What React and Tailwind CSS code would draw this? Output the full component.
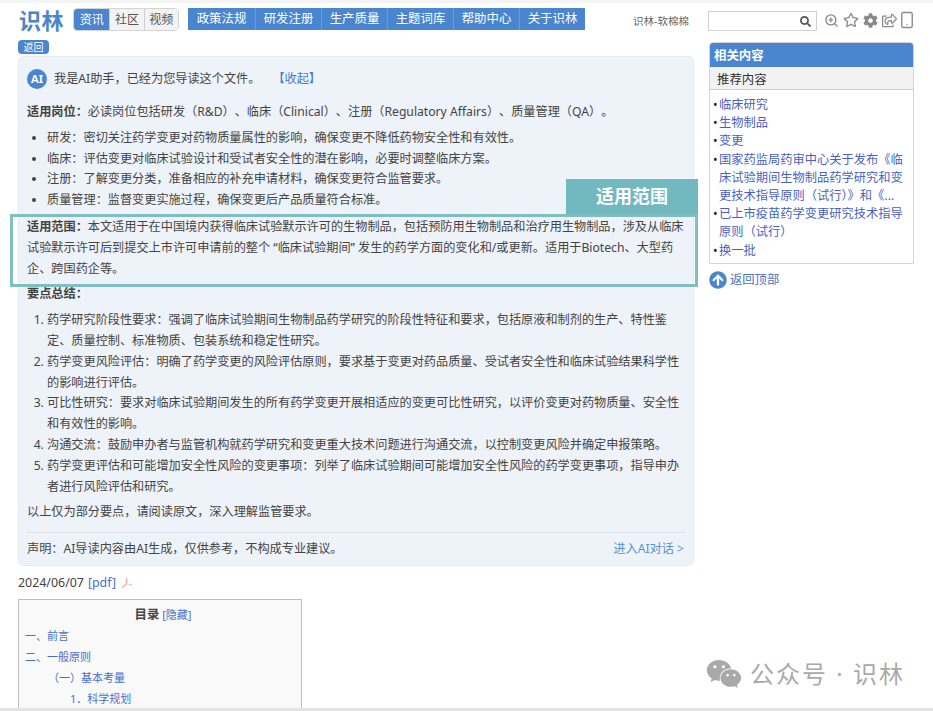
import { FaSearch, FaRegStar, FaCog, FaRegShareSquare, FaArrowCircleUp, FaWeixin } from "react-icons/fa";
import { SiAdobeacrobatreader } from "react-icons/si";
import { ZoomIn, Smartphone } from "lucide-react";

const tabs = ["资讯", "社区", "视频"];
const navItems = ["政策法规", "研发注册", "生产质量", "主题词库", "帮助中心", "关于识林"];

const roles = [
  "研发\uFF1A密切关注药学变更对药物质量属性的影响\uFF0C确保变更不降低药物安全性和有效性。",
  "临床\uFF1A评估变更对临床试验设计和受试者安全性的潜在影响\uFF0C必要时调整临床方案。",
  "注册\uFF1A了解变更分类\uFF0C准备相应的补充申请材料\uFF0C确保变更符合监管要求。",
  "质量管理\uFF1A监督变更实施过程\uFF0C确保变更后产品质量符合标准。",
];

const points = [
  "药学研究阶段性要求\uFF1A强调了临床试验期间生物制品药学研究的阶段性特征和要求\uFF0C包括原液和制剂的生产、特性鉴\n定、质量控制、标准物质、包装系统和稳定性研究。",
  "药学变更风险评估\uFF1A明确了药学变更的风险评估原则\uFF0C要求基于变更对药品质量、受试者安全性和临床试验结果科学性\n的影响进行评估。",
  "可比性研究\uFF1A要求对临床试验期间发生的所有药学变更开展相适应的变更可比性研究\uFF0C以评价变更对药物质量、安全性\n和有效性的影响。",
  "沟通交流\uFF1A鼓励申办者与监管机构就药学研究和变更重大技术问题进行沟通交流\uFF0C以控制变更风险并确定申报策略。",
  "药学变更评估和可能增加安全性风险的变更事项\uFF1A列举了临床试验期间可能增加安全性风险的药学变更事项\uFF0C指导申办\n者进行风险评估和研究。",
];

const related = [
  "临床研究",
  "生物制品",
  "变更",
  "国家药监局药审中心关于发布《临床试验期间生物制品药学研究和变更技术指导原则\uFF08试行\uFF09》和《...",
  "已上市疫苗药学变更研究技术指导原则\uFF08试行\uFF09",
  "换一批",
];

const rolesLine = "必读岗位包括研发\uFF08R&D\uFF09、临床\uFF08Clinical\uFF09、注册\uFF08Regulatory Affairs\uFF09、质量管理\uFF08QA\uFF09。";
const scopeLine = "本文适用于在中国境内获得临床试验默示许可的生物制品\uFF0C包括预防用生物制品和治疗用生物制品\uFF0C涉及从临床试验默示许可后到提交上市许可申请前的整个 “临床试验期间” 发生的药学方面的变化和/或更新。适用于Biotech、大型药企、跨国药企等。";

function Header() {
  return (
    <div className="flex items-start pl-[19px] pt-[5px]">
      <div className="w-[54px] text-[22px] leading-[24px] font-bold tracking-[0.5px] text-[#4a86cb]">识林</div>
      <div className="flex h-[23px] w-[106px] overflow-hidden rounded border border-[#d5d5d5] text-[12px] leading-[22px]">
        {tabs.map((t, i) => (
          <div
            key={t}
            className={i === 0 ? "w-[36px] bg-[#4a86cf] text-center text-white" : "w-[35px] border-l border-[#cfcfcf] bg-[#f3f3f3] text-center text-[#555]"}
          >
            {t}
          </div>
        ))}
      </div>
      <div className="ml-[9px] flex h-[22px] bg-[#4a86cf] text-[12.4px] leading-[22px] text-white">
        {navItems.map((n, i) => (
          <div key={n} className={i === 0 ? "w-[67px] text-center" : "w-[66px] border-l border-[#6a9bd8] text-center"}>
            {n}
          </div>
        ))}
      </div>
      <div className="ml-[48px] mt-[6px] w-[75px] text-[10.5px] leading-[14px] text-[#666]">识林-软棉棉</div>
      <div className="flex h-[20px] w-[109px] mt-[3px] items-center justify-end border border-[#d0d0d0] pr-[5px]">
        <FaSearch className="text-[11px] text-[#555]" />
      </div>
      <div className="ml-[7px] mt-[3px] flex items-center gap-[4px] text-[#8a8a8a]">
        <ZoomIn size={15} strokeWidth={2.2} />
        <FaRegStar className="text-[16px]" />
        <FaCog className="text-[15px]" />
        <FaRegShareSquare className="text-[15px]" />
        <Smartphone size={18} strokeWidth={1.8} className="-ml-[3px]" />
      </div>
    </div>
  );
}

function AiPanel() {
  return (
    <div className="rounded-md border border-[#e6e9f0] bg-[#eef2f9] text-[12.17px] leading-[20.8px] text-[#444] [text-spacing-trim:space-all]">
      <div className="px-[8px] pt-[11px]">
        <div className="flex h-[22px] items-center">
          <div className="flex h-[20px] w-[20px] items-center justify-center rounded-full bg-[#4a86cf] text-[11px] font-bold text-white">AI</div>
          <span className="ml-[7px]">{"我是AI助手\uFF0C已经为您导读这个文件。"}</span>
          <span className="ml-[12px] text-[#3b7fc9]">【收起】</span>
        </div>
        <p className="mt-[12px]">
          <b className="font-bold">{"适用岗位\uFF1A"}</b>{rolesLine}
        </p>
        <ul className="mt-[5px] list-disc pl-[20px]">
          {roles.map((r) => (
            <li key={r}>{r}</li>
          ))}
        </ul>
        <div className="relative mt-[6px]">
          <p>
            <b className="font-bold">{"适用范围\uFF1A"}</b>{scopeLine}
          </p>
          <div className="absolute -left-[17px] -right-[13px] -top-[3px] -bottom-[8px] border-[3px] border-[#7fbfc4]" />
          <div className="absolute -right-[13px] -top-[38px] flex h-[35px] w-[132px] items-center justify-center bg-[#72b9bf] text-[18px] font-bold text-white">适用范围</div>
        </div>
        <p className="mt-[5px] font-bold">{"要点总结\uFF1A"}</p>
        <ol className="mt-[5px] list-decimal whitespace-pre-line pl-[20px]">
          {points.map((p) => (
            <li key={p}>{p}</li>
          ))}
        </ol>
        <p className="mt-[5px]">{"以上仅为部分要点\uFF0C请阅读原文\uFF0C深入理解监管要求。"}</p>
      </div>
      <div className="mx-[8px] mt-[9px] flex h-[33px] items-center justify-between border-t border-[#dfe3ea] pr-[1px]">
        <span>{"声明\uFF1AAI导读内容由AI生成\uFF0C仅供参考\uFF0C不构成专业建议。"}</span>
        <span className="text-[#5b92d2]">进入AI对话 &gt;</span>
      </div>
    </div>
  );
}

function Toc() {
  return (
    <div className="mt-[6px] w-[284px] border border-[#bdbdbd] bg-[#f9f9f9] pl-[6px] pt-[4px] text-[11px] leading-[21px] text-[#4a6fc9]">
      <div className="text-center text-[#444]">
        <span className="text-[12.4px] font-bold">目录</span> <span className="text-[#4a6fc9]">[隐藏]</span>
      </div>
      <div>一、前言</div>
      <div>二、一般原则</div>
      <div className="pl-[23px]">{"\uFF08一\uFF09基本考量"}</div>
      <div className="pl-[45px]">{"1\uFF0E科学规划"}</div>
    </div>
  );
}

function Sidebar() {
  return (
    <div className="w-[205px] pt-[10px]">
      <div className="overflow-hidden rounded-t border border-[#d5d5d5]">
        <div className="-mx-px -mt-px h-[25px] bg-[#4a86cf] pl-[5px] text-[12.4px] font-bold leading-[28px] text-white">相关内容</div>
        <div className="h-[23px] border-b border-[#d0d0d0] bg-[#f2f2f2] pl-[7px] text-[12.4px] leading-[25px] text-[#333]">推荐内容</div>
        <ul className="pb-[3px] pl-[3px] pr-[6px] pt-[6px] text-[12.25px] leading-[18.2px] text-[#4a5fc1]">
          {related.map((r) => (
            <li key={r} className="flex">
              <span className="w-[6px] shrink-0 text-[#222]">•</span>
              <span>{r}</span>
            </li>
          ))}
        </ul>
      </div>
      <div className="mt-[7px] flex items-center text-[12.3px] leading-[18px] text-[#4a6fc1]">
        <FaArrowCircleUp className="text-[18px] text-[#4a86cf]" />
        <span className="ml-[3px]">返回顶部</span>
      </div>
    </div>
  );
}

export default function App() {
  return (
    <div className="relative h-[711px] w-[933px] overflow-hidden bg-white font-['Noto_Sans','Noto_Sans_CJK_SC',sans-serif]">
      <div className="h-[3px] bg-[#f4f4f4]" />
      <Header />
      <div className="flex gap-[15px] pl-[18px]">
        <div className="w-[676px] shrink-0">
          <div className="mt-[8px] h-[14px] w-[31px] rounded-sm bg-[#4a86cf] text-center text-[10px] leading-[14px] text-white">返回</div>
          <div className="mt-[2px]">
            <AiPanel />
          </div>
          <div className="mt-[7px] flex items-center text-[12.4px] leading-[20px] text-[#444]">
            2024/06/07
            <span className="ml-[4px] text-[#4a6fc9]">[pdf]</span>
            <SiAdobeacrobatreader className="ml-[6px] text-[10px] text-[#e98a7c]" />
          </div>
          <Toc />
        </div>
        <Sidebar />
      </div>
      <div className="absolute bottom-[19px] right-[28px] flex items-center text-[#a9a9a9]">
        <FaWeixin className="text-[36px]" />
        <span className="ml-[8px] whitespace-pre text-[24px] leading-[30px] tracking-[2px]">公众号 · 识林</span>
      </div>
      <div className="absolute inset-x-0 bottom-0 h-[3px] bg-[#e4e4e4]" />
    </div>
  );
}
